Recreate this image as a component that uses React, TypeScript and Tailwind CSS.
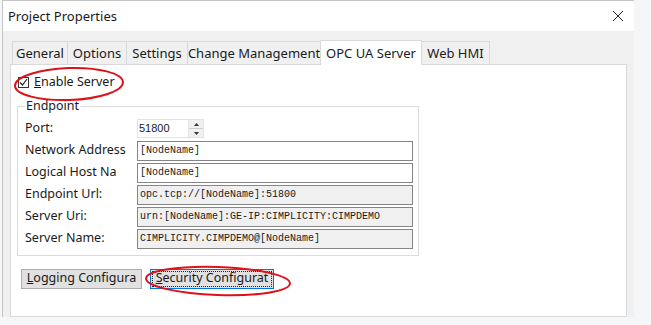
import React from "react";

const tabs = [
  { label: "General", w: "w-[56px]" },
  { label: "Options", w: "w-[60px]" },
  { label: "Settings", w: "w-[62px]" },
  { label: "Change Management", w: "w-[134px]" },
  { label: "OPC UA Server", w: "w-[102px]", active: true },
  { label: "Web HMI", w: "w-[69px]" },
];

const fields = [
  { label: "Network Address", value: "[NodeName]", readOnly: false },
  { label: "Logical Host Na", value: "[NodeName]", readOnly: false },
  { label: "Endpoint Url:", value: "opc.tcp://[NodeName]:51800", readOnly: true },
  { label: "Server Uri:", value: "urn:[NodeName]:GE-IP:CIMPLICITY:CIMPDEMO", readOnly: true },
  { label: "Server Name:", value: "CIMPLICITY.CIMPDEMO@[NodeName]", readOnly: true },
];

export default function App() {
  return (
    <div className="relative w-[651px] h-[325px] overflow-hidden bg-[#f5f6f8] pl-[2px] font-['Noto_Sans',sans-serif] text-[#1a1a1a]">
      {/* Dialog */}
      <div className="w-[632px] h-[317px] flex flex-col border-l border-t border-[#c4c4c4] bg-[#f0f0f0]">
        {/* Title bar */}
        <div className="h-[30px] shrink-0 bg-white flex items-center justify-between pl-[5px] pr-[10px]">
          <span className="text-[13px] leading-none">Project Properties</span>
          <svg width="12" height="12" viewBox="0 0 12 12">
            <path d="M1 1L11 11M11 1L1 11" stroke="#222" strokeWidth="1" fill="none" />
          </svg>
        </div>

        {/* Body */}
        <div className="flex-1 flex flex-col pt-[9px] pl-[7px] pr-[7px]">
          {/* Tabs */}
          <div className="flex items-end h-[24px] pl-[2px] relative z-10">
            {tabs.map((t) =>
              t.active ? (
                <div
                  key={t.label}
                  className={`${t.w} h-[25px] -mb-[1px] -ml-[1px] bg-white border border-b-0 border-[#d9d9d9] flex items-center justify-center text-[13px] leading-none whitespace-nowrap`}
                >
                  {t.label}
                </div>
              ) : (
                <div
                  key={t.label}
                  className={`${t.w} h-[23px] bg-[#f0f0f0] border border-b-0 border-[#d9d9d9] -ml-[1px] first:ml-0 flex items-center justify-center text-[13px] leading-none whitespace-nowrap`}
                >
                  {t.label}
                </div>
              )
            )}
          </div>

          {/* Panel */}
          <div className="flex-1 bg-white border border-[#d9d9d9] flex flex-col pl-[6px]">
            {/* Enable Server */}
            <div className="flex items-center gap-[5px] mt-[10px] h-[14px] ml-[1px]">
              <div className="w-[11px] h-[11px] border border-[#333] bg-white flex items-center justify-center">
                <svg width="9" height="9" viewBox="0 0 9 9">
                  <path d="M1 4.5L3.5 7L8 1" stroke="#222" strokeWidth="1.2" fill="none" />
                </svg>
              </div>
              <span className="text-[12.5px] leading-none">
                <span className="underline">E</span>nable Server
              </span>
            </div>

            {/* Endpoint group */}
            <fieldset className="mt-[11px] w-[402px] border border-[#dcdcdc] pl-[7px] pr-[4px] pb-[6px]">
              <legend className="text-[12.5px] leading-none px-[1px]">Endpoint</legend>
              <div className="flex flex-col gap-[2px] mt-[6px]">
                <div className="flex items-center h-[20px]">
                  <span className="w-[112px] text-[12.5px] leading-none">Port:</span>
                  <div className="w-[67px] h-[19px] border border-[#e3e3e3] bg-white flex items-center">
                    <span className="flex-1 pl-[1px] text-[11px] leading-none font-['Liberation_Sans',sans-serif]">51800</span>
                    <div className="w-[15px] h-[17px] flex flex-col border-l border-[#e3e3e3] bg-[#f0f0f0]">
                      <div className="flex-1 flex items-center justify-center border-b border-[#d0d0d0]">
                        <svg width="5" height="3" viewBox="0 0 5 3">
                          <path d="M0 3L2.5 0L5 3Z" fill="#333" />
                        </svg>
                      </div>
                      <div className="flex-1 flex items-center justify-center">
                        <svg width="5" height="3" viewBox="0 0 5 3">
                          <path d="M0 0L2.5 3L5 0Z" fill="#333" />
                        </svg>
                      </div>
                    </div>
                  </div>
                </div>
                {fields.map((f) => (
                  <div key={f.label} className="flex items-center h-[20px]">
                    <span className="w-[112px] text-[12.5px] leading-none whitespace-nowrap">{f.label}</span>
                    <div
                      className={`w-[276px] h-[20px] border border-[#858585] flex items-center pl-[2px] font-['Liberation_Mono',monospace] text-[10px] leading-none ${
                        f.readOnly ? "bg-[#f0f0f0]" : "bg-white"
                      }`}
                    >
                      {f.value}
                    </div>
                  </div>
                ))}
              </div>
            </fieldset>

            {/* Buttons */}
            <div className="flex gap-[8px] mt-[13px] ml-[4px]">
              <button className="w-[121px] h-[20px] bg-[#e1e1e1] border border-[#adadad] text-[12.5px] leading-none flex items-center justify-center">
                <span>
                  <span className="underline">L</span>ogging Configura
                </span>
              </button>
              <button className="w-[124px] h-[20px] bg-[#e1e1e1] border border-[#0078d7] p-[1px] text-[12.5px] leading-none">
                <span className="w-full h-full flex items-center justify-center border border-dotted border-[#222]">
                  <span>
                    <span className="underline">S</span>ecurity Configurat
                  </span>
                </span>
              </button>
            </div>
          </div>
        </div>
      </div>

      {/* Red annotation ellipses */}
      <svg className="absolute left-0 top-0 pointer-events-none" width="651" height="325">
        <ellipse cx="69" cy="84" rx="54" ry="16" stroke="#e0101a" strokeWidth="2" fill="none" transform="rotate(-2 69 84)" />
        <ellipse cx="218" cy="281" rx="72" ry="14" stroke="#e0101a" strokeWidth="2" fill="none" transform="rotate(2 218 281)" />
      </svg>
    </div>
  );
}
